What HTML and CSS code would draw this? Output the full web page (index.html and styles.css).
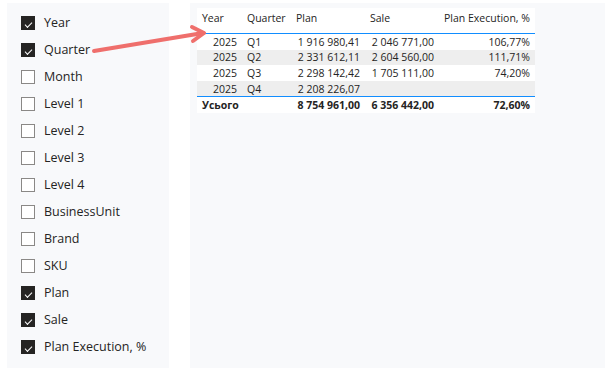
FILE: index.html
```html
<!DOCTYPE html>
<html lang="uk">
<head>
    <meta charset="UTF-8">
    <meta name="viewport" content="width=device-width, initial-scale=1.0">
    <title>Plan Execution</title>
    <link rel="stylesheet" href="styles.css">
</head>
<body>
    <div class="page">
        <!-- Список полів -->
        <div class="fields">
            <label class="field"><span class="box checked"></span>Year</label>
            <label class="field"><span class="box checked"></span>Quarter</label>
            <label class="field"><span class="box"></span>Month</label>
            <label class="field"><span class="box"></span>Level 1</label>
            <label class="field"><span class="box"></span>Level 2</label>
            <label class="field"><span class="box"></span>Level 3</label>
            <label class="field"><span class="box"></span>Level 4</label>
            <label class="field"><span class="box"></span>BusinessUnit</label>
            <label class="field"><span class="box"></span>Brand</label>
            <label class="field"><span class="box"></span>SKU</label>
            <label class="field"><span class="box checked"></span>Plan</label>
            <label class="field"><span class="box checked"></span>Sale</label>
            <label class="field"><span class="box checked"></span>Plan Execution, %</label>
        </div>

        <!-- Таблиця -->
        <div class="visual">
            <table class="matrix">
                <colgroup>
                    <col class="c-year"><col class="c-quarter"><col class="c-plan"><col class="c-sale"><col class="c-exec">
                </colgroup>
                <thead>
                    <tr>
                        <th>Year</th>
                        <th>Quarter</th>
                        <th>Plan</th>
                        <th>Sale</th>
                        <th class="num">Plan Execution, %</th>
                    </tr>
                </thead>
                <tbody>
                    <tr><td class="num">2025</td><td>Q1</td><td class="num">1 916 980,41</td><td class="num">2 046 771,00</td><td class="num">106,77%</td></tr>
                    <tr><td class="num">2025</td><td>Q2</td><td class="num">2 331 612,11</td><td class="num">2 604 560,00</td><td class="num">111,71%</td></tr>
                    <tr><td class="num">2025</td><td>Q3</td><td class="num">2 298 142,42</td><td class="num">1 705 111,00</td><td class="num">74,20%</td></tr>
                    <tr><td class="num">2025</td><td>Q4</td><td class="num">2 208 226,07</td><td class="num"></td><td class="num"></td></tr>
                </tbody>
                <tfoot>
                    <tr><td colspan="2">Усього</td><td class="num">8 754 961,00</td><td class="num">6 356 442,00</td><td class="num">72,60%</td></tr>
                </tfoot>
            </table>
        </div>
    </div>

    <!-- Стрілка -->
    <svg class="arrow" width="605" height="368" viewBox="0 0 605 368">
        <g fill="none" stroke="#ef6f6c" stroke-width="4" stroke-linecap="round" stroke-linejoin="round">
            <line x1="94" y1="51" x2="203" y2="33"/>
            <polyline points="192,27 204,33 193,41"/>
        </g>
    </svg>
</body>
</html>
```

FILE: styles.css
```css
body {
    margin: 0;
    background-color: white;
    color: #252423;
    font-family: 'Open Sans', 'Noto Sans', sans-serif;
}
.page {
    display: flex;
    gap: 21px;
    padding: 3px 0 0 7px;
    height: 365px;
}
.fields {
    width: 162px;
    background-color: #f8f9fb;
    padding-top: 6px;
    display: flex;
    flex-direction: column;
}
.field {
    display: flex;
    align-items: center;
    height: 27px;
    padding-left: 14px;
    font-size: 12.5px;
}
.box {
    width: 12px;
    height: 12px;
    border: 1px solid #8a8886;
    background-color: white;
    margin-right: 9px;
    position: relative;
}
.box.checked {
    background-color: #252423;
    border-color: #252423;
}
.box.checked::after {
    content: '';
    position: absolute;
    left: 3px;
    top: 5px;
    width: 6px;
    height: 3px;
    border-left: 1px solid white;
    border-bottom: 1px solid white;
    transform: rotate(-45deg);
}
.visual {
    flex: 1;
    background-color: #f8f9fb;
    padding: 5px 0 0 7px;
}
.matrix {
    border-collapse: collapse;
    table-layout: fixed;
    width: 338px;
    background-color: white;
    font-size: 10.5px;
}
.c-year { width: 45px; }
.c-quarter { width: 49px; }
.c-plan { width: 74px; }
.c-sale { width: 74px; }
.c-exec { width: 96px; }
.matrix th {
    font-weight: normal;
    text-align: left;
    height: 20px;
    padding: 0 5px 5px 5px;
    vertical-align: middle;
    border-bottom: 1.5px solid #118dff;
    white-space: nowrap;
}
.matrix td {
    height: 15.6px;
    padding: 0 5px;
    white-space: nowrap;
}
.matrix tbody tr:nth-child(even) {
    background-color: #eeeeee;
}
.matrix tfoot td {
    font-weight: bold;
    border-top: 1.5px solid #118dff;
    height: 16px;
}
.matrix .num {
    text-align: right;
}
.arrow {
    position: absolute;
    left: 0;
    top: 0;
    pointer-events: none;
}
```
